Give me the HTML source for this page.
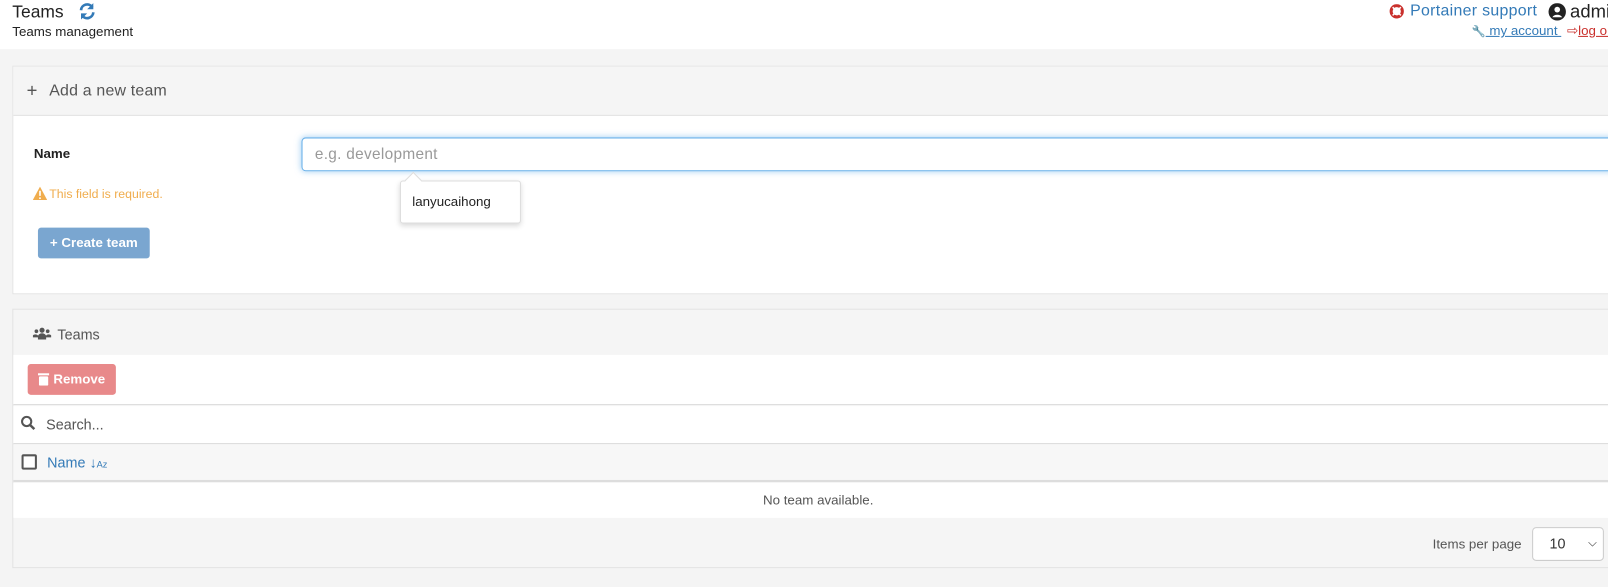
<!DOCTYPE html>
<html><head><meta charset="utf-8"><style>
*{box-sizing:border-box;margin:0;padding:0}
body{width:1608px;height:586px;overflow:hidden;background:#f4f4f4;font-family:"Liberation Sans",sans-serif;position:relative;color:#333}
#w{position:absolute;left:0;top:0;width:1568px;height:572px;transform:scale(1.02551);transform-origin:0 0}
.abs{position:absolute;white-space:nowrap}
.hdr{left:0;top:0;width:1568px;height:48px;background:#fff}
.panel{left:12px;width:1620px;border:1px solid #e3e3e3;background:#fff}
</style></head><body><div id="w">
<div class="abs hdr"></div>
<div class="abs" style="left:12px;top:2px;font-size:17px;color:#222">Teams</div>
<svg class="abs" style="left:76px;top:2px" width="18" height="18" viewBox="0 0 18 18"><path d="M3 8a6 6 0 0 1 11-3" stroke="#337ab7" stroke-width="2.6" fill="none"/><path d="M15 1v6h-6z" fill="#337ab7"/><path d="M15 10a6 6 0 0 1-11 3" stroke="#337ab7" stroke-width="2.6" fill="none"/><path d="M3 17v-6h6z" fill="#337ab7"/></svg>
<div class="abs" style="left:12px;top:23px;font-size:13px;color:#222">Teams management</div>
<svg class="abs" style="left:1355px;top:4px" width="14" height="14" viewBox="0 0 14 14"><circle cx="7" cy="7" r="5.5" stroke="#c9302c" stroke-width="3" fill="none"/><path d="M3 3l8 8M11 3l-8 8" stroke="#fff" stroke-width="1.5"/></svg>
<div class="abs" style="left:1375px;top:2px;font-size:15.5px;color:#337ab7;letter-spacing:0.3px">Portainer support</div>
<svg class="abs" style="left:1510px;top:3px" width="17" height="17" viewBox="0 0 16 16"><circle cx="8" cy="8" r="8" fill="#222"/><circle cx="8" cy="6" r="2.6" fill="#fff"/><path d="M3.5 13a5 4 0 0 1 9 0" fill="#fff"/></svg>
<div class="abs" style="left:1531px;top:1px;font-size:18px;color:#222">admin</div>
<div class="abs" style="left:1435px;top:22px;font-size:13px;color:#337ab7"><span style="font-size:11px">&#x1F527;</span><u>&nbsp;my account&nbsp;</u></div>
<div class="abs" style="left:1528px;top:22px;font-size:13px;color:#c9302c">⇨<u>log out</u></div>

<div class="abs panel" style="top:64px;height:223px"></div>
<div class="abs" style="left:13px;top:65px;width:1600px;height:48px;background:#f5f5f5;border-bottom:1px solid #e3e3e3"></div>
<div class="abs" style="left:26px;top:78px;font-size:18px;color:#555">+</div>
<div class="abs" style="left:48px;top:80px;font-size:15.5px;color:#555;letter-spacing:0.2px">Add a new team</div>
<div class="abs" style="left:33px;top:142px;font-size:13px;font-weight:bold;color:#222">Name</div>
<div class="abs" style="left:294px;top:134px;width:1330px;height:33px;border:1px solid #66afe9;border-radius:4px;box-shadow:0 0 6px rgba(102,175,233,.6)"></div>
<div class="abs" style="left:307px;top:142px;font-size:15px;color:#999;letter-spacing:0.3px">e.g. development</div>
<div class="abs" style="left:390px;top:176px;width:118px;height:42px;background:#fff;border:1px solid #ddd;border-radius:3px;box-shadow:0 2px 5px rgba(0,0,0,.15)"></div>
<div class="abs" style="left:397px;top:170px;width:12px;height:12px;background:#fff;transform:rotate(45deg);border-left:1px solid #ddd;border-top:1px solid #ddd"></div>
<div class="abs" style="left:402px;top:189px;font-size:13px;color:#222">lanyucaihong</div>
<svg class="abs" style="left:32px;top:182px" width="14" height="13" viewBox="0 0 14 13"><path d="M7 0L14 13H0z" fill="#f0ad4e"/><path d="M7 4v5M7 10.5v1.5" stroke="#fff" stroke-width="1.6"/></svg>
<div class="abs" style="left:48px;top:182px;font-size:12px;color:#f0ad4e">This field is required.</div>
<div class="abs" style="left:37px;top:222px;width:109px;height:30px;background:#7aa6d0;border-radius:3px;color:#fff;font-size:13px;font-weight:bold;line-height:30px;text-align:center">+ Create team</div>

<div class="abs panel" style="top:301px;height:253px;background:#f5f5f5"></div>
<svg class="abs" style="left:32px;top:319px" width="18" height="12" viewBox="0 0 18 12"><circle cx="9" cy="3" r="2.5" fill="#555"/><circle cx="3.5" cy="4" r="1.8" fill="#555"/><circle cx="14.5" cy="4" r="1.8" fill="#555"/><path d="M5 12v-3a4 3 0 0 1 8 0v3z M0 10v-2a3 2 0 0 1 5 0v2z M13 10v-2a3 2 0 0 1 5 0v2z" fill="#555"/></svg>
<div class="abs" style="left:56px;top:318px;font-size:14px;color:#555">Teams</div>
<div class="abs" style="left:13px;top:346px;width:1600px;height:49px;background:#fff;border-bottom:1px solid #ddd"></div>
<div class="abs" style="left:27px;top:355px;width:86px;height:30px;background:#e8898a;border-radius:3px;color:#fff;font-size:13px;font-weight:bold;line-height:30px;padding-left:25px">Remove</div>
<svg class="abs" style="left:37px;top:363px" width="11" height="13" viewBox="0 0 11 13"><rect x="0" y="1" width="11" height="2" fill="#fff"/><rect x="1" y="4" width="9" height="9" rx="1" fill="#fff"/></svg>
<div class="abs" style="left:13px;top:396px;width:1600px;height:37px;background:#fff;border-bottom:1px solid #ddd"></div>
<svg class="abs" style="left:20px;top:405px" width="15" height="15" viewBox="0 0 15 15"><circle cx="6" cy="6" r="4.5" stroke="#555" stroke-width="2" fill="none"/><path d="M9.5 9.5l4 4" stroke="#555" stroke-width="2.4"/></svg>
<div class="abs" style="left:45px;top:406px;font-size:14px;color:#555">Search...</div>
<div class="abs" style="left:13px;top:434px;width:1600px;height:36px;background:#f7f7f7;border-bottom:2px solid #ddd"></div>
<div class="abs" style="left:21px;top:443px;width:15px;height:15px;border:2px solid #555;border-radius:2px;background:#fff"></div>
<div class="abs" style="left:46px;top:443px;font-size:14px;color:#337ab7">Name ↓<span style="font-size:9px">Az</span></div>
<div class="abs" style="left:13px;top:471px;width:1600px;height:34px;background:#fff"></div>
<div class="abs" style="left:744px;top:480px;font-size:13px;color:#555">No team available.</div>
<div class="abs" style="left:1397px;top:523px;font-size:13px;color:#555">Items per page</div>
<div class="abs" style="left:1494px;top:514px;width:70px;height:33px;border:1px solid #ccc;border-radius:4px;background:#fff;font-size:14px;line-height:31px;padding-left:16px;color:#333">10<span style="position:absolute;right:6px;top:0;font-size:11px">&#x2335;</span></div>
</div></body></html>
